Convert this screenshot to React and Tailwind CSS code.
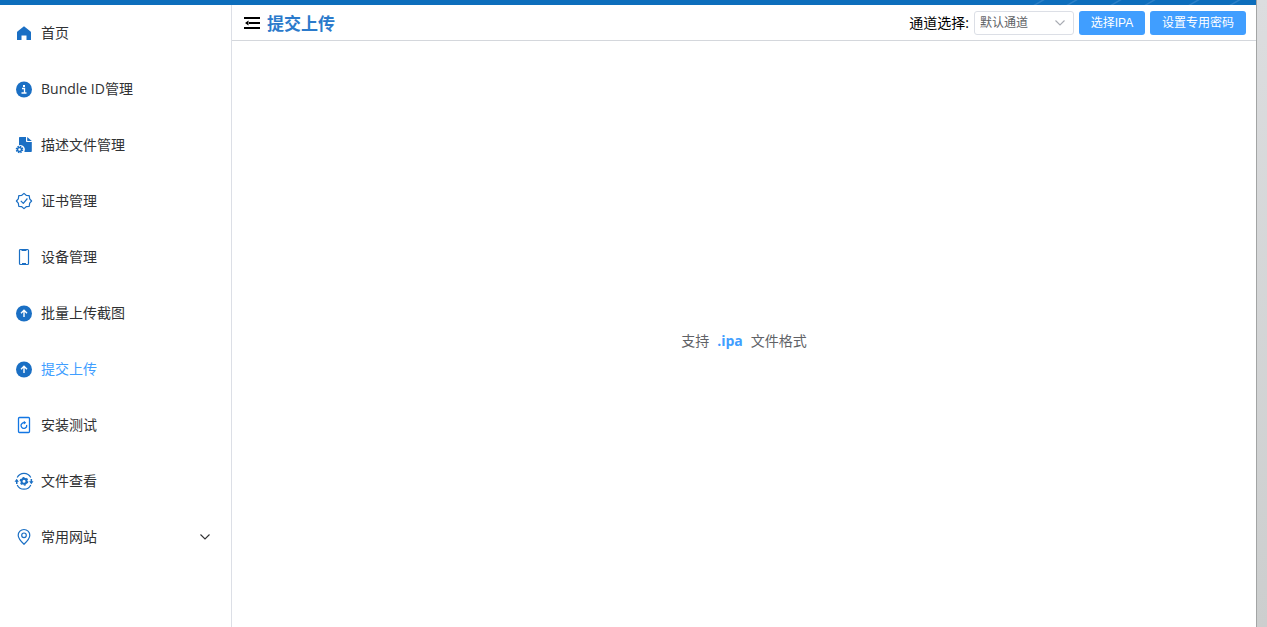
import { useState } from "react";

const HomeIcon = () => (
  <svg width="18" height="18" viewBox="0 0 18 18" fill="#1a6fc4">
    <path d="M9 2.200 15.600 7.600c.3.3.4.6.4 1V16h-4.500v-4.500h-5V16H2V8.600c0-.4.1-.7.4-1z" />
  </svg>
);

const InfoIcon = () => (
  <svg width="18" height="18" viewBox="0 0 18 18">
    <circle cx="9" cy="9.500" r="8" fill="#1a6fc4" />
    <rect x="8" y="5" width="2" height="2" fill="#fff" />
    <path d="M7 8.500h2.500V13M6.500 13h5" fill="none" stroke="#fff" strokeWidth="1.300" />
  </svg>
);

const ProfileIcon = () => (
  <svg width="18" height="18" viewBox="0 0 18 18">
    <path
      d="M5 1h6v4.200c0 .5.3.8.8.8h5v9c0 .6-.4 1-1 1H9.400A4.700 4.700 0 0 0 4 9.200V2c0-.6.4-1 1-1z"
      fill="#1a6fc4"
    />
    <path d="M12.200 1 16.800 5h-4.100c-.3 0-.5-.2-.5-.5z" fill="#1a6fc4" />
    <circle cx="4.500" cy="13.500" r="2" fill="none" stroke="#1a6fc4" strokeWidth="1.500" />
    <circle
      cx="4.500"
      cy="13.500"
      r="3.200"
      fill="none"
      stroke="#1a6fc4"
      strokeWidth="1.200"
      strokeDasharray="1.500 1.013"
    />
  </svg>
);

const CertIcon = () => (
  <svg
    width="18"
    height="18"
    viewBox="0 0 18 18"
    fill="none"
    stroke="#1a6fc4"
    strokeWidth="1.200"
    strokeLinejoin="round"
  >
    <path d="M9 1.400 11.200 3.300 14.200 3.700 14.700 6.800 16.600 9 14.700 11.200 14.200 14.300 11.200 14.700 9 16.600 6.800 14.700 3.800 14.300 3.300 11.200 1.400 9 3.300 6.800 3.800 3.700 6.800 3.300z" />
    <path d="m5.800 8.800 2.500 2.500 4.100-4.800" />
  </svg>
);

const PhoneIcon = () => (
  <svg width="18" height="18" viewBox="0 0 18 18" fill="none" stroke="#1a6fc4">
    <rect x="4.500" y="1.500" width="9" height="15" rx="1" strokeWidth="1.200" />
    <path d="M6.500 2.200h5M7 15.800h4" strokeWidth="1.400" />
  </svg>
);

const UploadIcon = () => (
  <svg width="18" height="18" viewBox="0 0 18 18">
    <circle cx="9" cy="9.500" r="8" fill="#1a6fc4" />
    <path d="M9 13V6.500M6 9.200l3-3 3 3" fill="none" stroke="#fff" strokeWidth="1.400" />
  </svg>
);

const InstallIcon = () => (
  <svg width="18" height="18" viewBox="0 0 18 18" fill="none" stroke="#1276e3">
    <rect x="3.500" y="1.500" width="11" height="15" rx="1" strokeWidth="1.300" />
    <path d="M11.600 8.800a2.800 2.800 0 1 1-4.600-1.300c.6-.6 1.200-.8 2-.8" strokeWidth="1.200" />
    <path d="M8.800 4.800 11.200 6.700 8.800 8.600z" fill="#1276e3" stroke="none" />
  </svg>
);

const ViewIcon = () => (
  <svg width="20" height="18" viewBox="0 0 20 18" fill="none" stroke="#1a6fc4">
    <path
      d="M3.200 5.500a7.600 7.600 0 0 1 13.600 0M3.200 13a7.600 7.600 0 0 0 13.600 0"
      strokeWidth="1.200"
    />
    <path
      d="M.5 9.800 2.700 6.800l2.200 3H3.500v2.200H2V9.800zM15.100 9.200h1.500V7h1.500v2.200h1.400l-2.200 3z"
      fill="#1a6fc4"
      stroke="none"
    />
    <circle cx="10" cy="9.300" r="2.500" strokeWidth="2" />
    <circle cx="10" cy="9.300" r="3.700" strokeWidth="1.300" strokeDasharray="1.900 1.974" />
  </svg>
);

const PinIcon = () => (
  <svg
    width="18"
    height="18"
    viewBox="0 0 18 18"
    fill="none"
    stroke="#1a6fc4"
    strokeWidth="1.200"
  >
    <path d="M9 16.300C5.500 13 3.200 10.200 3.200 7.300a5.800 5.800 0 0 1 11.600 0c0 2.900-2.300 5.700-5.800 9z" />
    <circle cx="9" cy="7.300" r="2.300" />
  </svg>
);

const Chevron = ({ className }) => (
  <svg
    className={className}
    width="12"
    height="12"
    viewBox="0 0 12 12"
    fill="none"
    stroke="currentColor"
    strokeWidth="1.100"
  >
    <path d="m1.500 3.500 4.500 4.500 4.500-4.500" />
  </svg>
);

const menu = [
  { label: "首页", Icon: HomeIcon },
  { label: "Bundle ID管理", Icon: InfoIcon },
  { label: "描述文件管理", Icon: ProfileIcon },
  { label: "证书管理", Icon: CertIcon },
  { label: "设备管理", Icon: PhoneIcon },
  { label: "批量上传截图", Icon: UploadIcon },
  { label: "提交上传", Icon: UploadIcon },
  { label: "安装测试", Icon: InstallIcon },
  { label: "文件查看", Icon: ViewIcon },
  { label: "常用网站", Icon: PinIcon, hasChildren: true },
];

const Sidebar = ({ active, onSelect }) => (
  <nav className="w-[232px] shrink-0 border-r border-[#dcdfe6]">
    <ul>
      {menu.map(({ label, Icon, hasChildren }) => (
        <li key={label}>
          <button
            type="button"
            onClick={() => onSelect(label)}
            className={`flex h-14 w-full cursor-pointer items-center pl-3.5 pr-5 ${
              active === label ? "text-[#409eff]" : "text-[#303133]"
            }`}
          >
            <span className="flex w-5 justify-center">
              <Icon />
            </span>
            <span className="ml-[7px]">{label}</span>
            {hasChildren && <Chevron className="ml-auto" />}
          </button>
        </li>
      ))}
    </ul>
  </nav>
);

const Header = ({ title }) => (
  <header className="flex h-9 items-center border-b border-[#d4d7dc] pl-3 pr-2.5">
    <button type="button" aria-label="收起菜单" className="cursor-pointer">
      <svg width="16" height="12" viewBox="0 0 16 12">
        <path d="M0 0h16v2H0zM5 5h11v2H5zM0 10h16v2H0zM1 6l3.500-2.500v5z" />
      </svg>
    </button>
    <h1 className="ml-[7px] pt-1 text-[17px] font-bold text-[#2b7acb]">{title}</h1>

    <div className="ml-auto flex items-center gap-[5px]">
      <label htmlFor="channel" className="text-black">
        通道选择:
      </label>
      <div className="relative">
        <select
          id="channel"
          className="block h-6 w-[100px] appearance-none rounded-[3px] border border-[#dcdfe6] bg-white pl-[5px] text-xs text-[#606266] outline-none"
        >
          <option>默认通道</option>
        </select>
        <Chevron className="pointer-events-none absolute right-2 top-1.5 text-[#a8abb2]" />
      </div>
      <button
        type="button"
        className="h-6 w-[66px] cursor-pointer rounded-[3px] bg-[#409eff] font-['Liberation_Sans','Noto_Sans_CJK_SC',sans-serif] text-xs text-white"
      >
        选择IPA
      </button>
      <button
        type="button"
        className="h-6 w-24 cursor-pointer rounded-[3px] bg-[#409eff] font-['Liberation_Sans','Noto_Sans_CJK_SC',sans-serif] text-xs text-white"
      >
        设置专用密码
      </button>
    </div>
  </header>
);

const DropZone = () => (
  <main className="flex flex-1 items-center justify-center pt-3.5 text-[#606266]">
    <p className="flex gap-2">
      <span>支持</span>
      <strong className="text-[#409eff]">.ipa</strong>
      <span>文件格式</span>
    </p>
  </main>
);

// lower edge of the title bar, with the faint diagonal streaks on its right
const TitleBar = () => (
  <div className="flex h-[5px] justify-end bg-[#0d6ebc]">
    <svg width="240" height="5" viewBox="0 0 240 5" stroke="#2d80c6" strokeWidth="1.500">
      <path d="M17 6 29-1M50 6 62-1M94 6 106-1M128 6 140-1M172 6 184-1M213 6 225-1" />
    </svg>
  </div>
);

export default function App() {
  const [active, setActive] = useState("提交上传");

  return (
    <div className="flex min-h-screen font-['Open_Sans','Noto_Sans_CJK_SC',sans-serif] text-sm">
      <div className="flex min-w-0 flex-1 flex-col bg-white">
        <TitleBar />
        <div className="flex flex-1">
          <Sidebar active={active} onSelect={setActive} />
          <div className="flex min-w-0 flex-1 flex-col">
            <Header title="提交上传" />
            <DropZone />
          </div>
        </div>
      </div>
      <div className="w-[11px] shrink-0 border-l border-[#a3a5a5] bg-linear-to-b from-[#dcdddf] to-[#cccece]" />
    </div>
  );
}
